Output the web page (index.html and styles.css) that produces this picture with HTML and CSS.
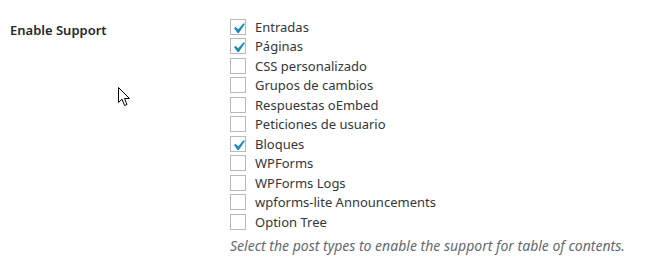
FILE: index.html
```html
<!DOCTYPE html>
<html lang="es">
<head>
    <meta charset="UTF-8">
    <title>Enable Support</title>
    <link rel="stylesheet" href="styles.css">
</head>
<body>
    <div class="fila">
        <div class="etiqueta">Enable Support</div>
        <div class="opciones">
            <ul class="lista">
                <li><span class="caja marcada"><svg viewBox="0 0 20 20"><path d="M14.83 4.89l1.34.94-5.81 8.38H9.02L5.78 9.670l1.34-1.25 2.57 2.4z"/></svg></span>Entradas</li>
                <li><span class="caja marcada"><svg viewBox="0 0 20 20"><path d="M14.83 4.89l1.34.94-5.81 8.38H9.02L5.78 9.67l1.34-1.25 2.57 2.4z"/></svg></span>Páginas</li>
                <li><span class="caja"></span>CSS personalizado</li>
                <li><span class="caja"></span>Grupos de cambios</li>
                <li><span class="caja"></span>Respuestas oEmbed</li>
                <li><span class="caja"></span>Peticiones de usuario</li>
                <li><span class="caja marcada"><svg viewBox="0 0 20 20"><path d="M14.83 4.89l1.34.94-5.81 8.38H9.02L5.78 9.67l1.34-1.25 2.57 2.4z"/></svg></span>Bloques</li>
                <li><span class="caja"></span>WPForms</li>
                <li><span class="caja"></span>WPForms Logs</li>
                <li><span class="caja"></span>wpforms-lite Announcements</li>
                <li><span class="caja"></span>Option Tree</li>
            </ul>
            <p class="descripcion">Select the post types to enable the support for table of contents.</p>
        </div>
    </div>

    <!-- puntero del ratón -->
    <svg class="cursor" width="13" height="20" viewBox="0 0 13 20">
        <path d="M0.5 0.5 L0.5 15.5 L4 12.2 L6.6 18.5 L9 17.5 L6.5 11.5 L11.5 11.5 Z" fill="#fff" stroke="#000" stroke-width="1"/>
    </svg>
</body>
</html>
```

FILE: styles.css
```css
/* Estilos de la fila de ajustes */

body {
    margin: 0;
    background: #fff;
    font-family: "Noto Sans", "Open Sans", sans-serif;
    font-size: 13px;
    color: #32373c;
}
.fila {
    display: flex;
    padding: 17px 0 0 10px;
}
.etiqueta {
    width: 220px;
    font-weight: 600;
    color: #23282d;
    line-height: 19.5px;
    padding-top: 4px;
}
.lista {
    list-style: none;
    margin: 0;
    padding: 0;
}
.lista li {
    display: flex;
    align-items: center;
    height: 19.5px;
}
.caja {
    width: 14px;
    height: 14px;
    border: 1px solid #b4b9be;
    background: #fff;
    margin-right: 9px;
    position: relative;
}
.caja svg {
    position: absolute;
    left: -3px;
    top: -2px;
    width: 21px;
    height: 21px;
    fill: #1e8cbe;
}
.descripcion {
    margin: 4px 0 0;
    font-style: italic;
    font-size: 14px;
    color: #646970;
    line-height: 19.5px;
}
.cursor {
    position: absolute;
    left: 118px;
    top: 87px;
}
```
